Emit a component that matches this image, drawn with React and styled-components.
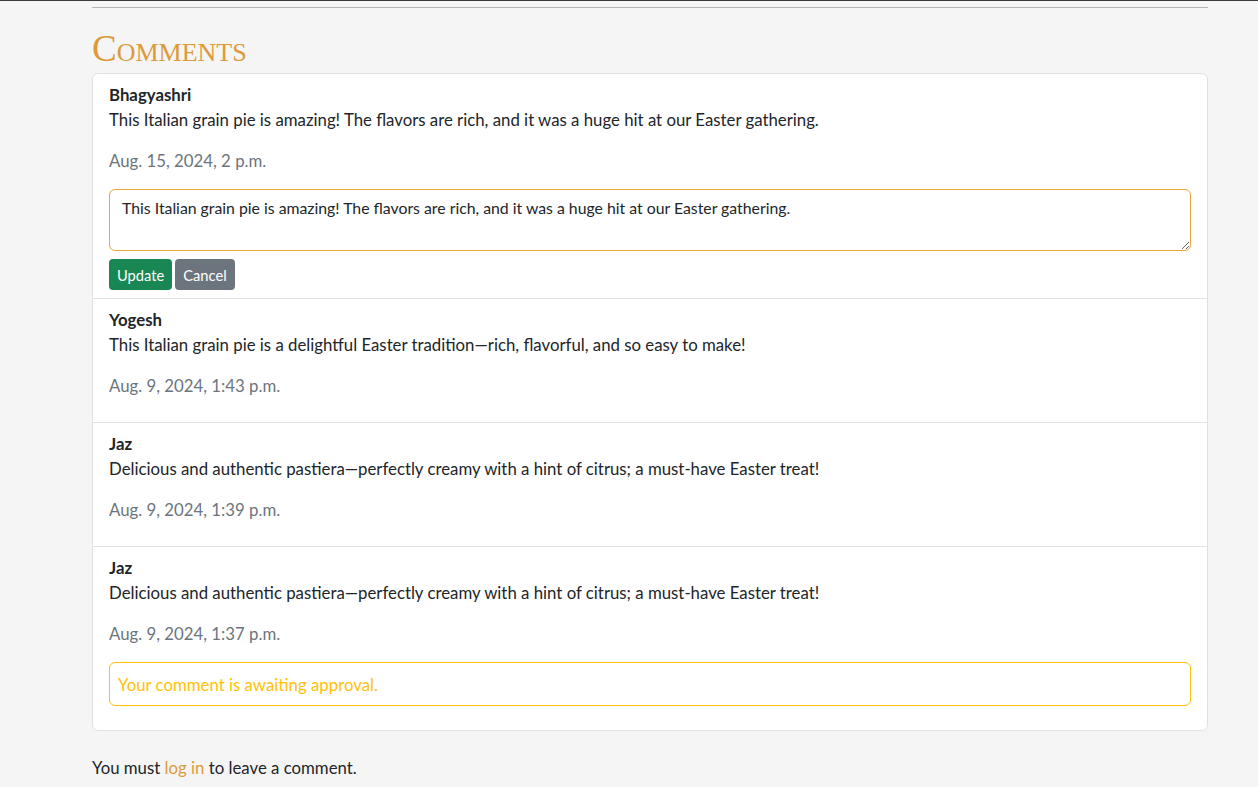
import React from "react";
import styled, { createGlobalStyle } from "styled-components";

const Global = createGlobalStyle`
  html, body { margin: 0; padding: 0; background: #f5f5f5; }
  body {
    font-family: Lato, "Noto Sans", sans-serif;
    font-size: 16.8px;
    line-height: 25px;
    color: #212529;
  }
  * { box-sizing: border-box; }
`;

const TopEdge = styled.div`
  height: 1px;
  background: #3a3a3a;
`;

const Container = styled.div`
  width: 1116px;
  margin-left: 92px;
  padding-top: 6px;
`;

const Rule = styled.hr`
  margin: 0;
  border: 0;
  border-top: 1px solid #b5b5b5;
`;

const Heading = styled.h3`
  margin: 19px 0 2px;
  font-family: "Liberation Serif", "DejaVu Serif", serif;
  font-variant: small-caps;
  font-weight: 400;
  font-size: 37px;
  line-height: 44px;
  color: #dc9a3c;
`;

const Card = styled.div`
  background: #fff;
  border: 1px solid #dee2e6;
  border-radius: 6px;
`;

const Item = styled.div`
  padding: 8px 16px;
  & + & { border-top: 1px solid #dee2e6; }
`;

const Name = styled.div`
  font-weight: 700;
`;

const Body = styled.p`
  margin: 0 0 16px;
`;

const DateLine = styled.p`
  margin: 0 0 16px;
  color: #6c757d;
`;

const TextArea = styled.textarea`
  display: block;
  width: 100%;
  height: 62px;
  padding: 6px 12px;
  border: 1px solid #e9a83a;
  border-radius: 6px;
  font-family: Lato, "Noto Sans", sans-serif;
  font-size: 15.8px;
  line-height: 1.5;
  color: #212529;
  outline: none;
  resize: vertical;
`;

const Actions = styled.div`
  display: flex;
  gap: 3px;
  margin-top: 8px;
`;

const Button = styled.button`
  height: 31px;
  padding: 0 8px;
  border: 0;
  border-radius: 4px;
  font-family: Lato, "Noto Sans", sans-serif;
  font-size: 14.7px;
  color: #fff;
  background: ${(p) => (p.$variant === "success" ? "#198754" : "#6c757d")};
  cursor: pointer;
`;

const Alert = styled.div`
  margin-bottom: 16px;
  padding: 8.5px 8px;
  border: 1px solid #ffc107;
  border-radius: 6px;
  color: #ffc107;
`;

const Footer = styled.p`
  margin: 24px 0 0;
`;

const Link = styled.a`
  color: #dc9a3c;
  text-decoration: none;
`;

const comments = [
  {
    name: "Bhagyashri",
    body: "This Italian grain pie is amazing! The flavors are rich, and it was a huge hit at our Easter gathering.",
    date: "Aug. 15, 2024, 2 p.m.",
    editing: true,
  },
  {
    name: "Yogesh",
    body: "This Italian grain pie is a delightful Easter tradition\u2014rich, flavorful, and so easy to make!",
    date: "Aug. 9, 2024, 1:43 p.m.",
  },
  {
    name: "Jaz",
    body: "Delicious and authentic pastiera\u2014perfectly creamy with a hint of citrus; a must-have Easter treat!",
    date: "Aug. 9, 2024, 1:39 p.m.",
  },
  {
    name: "Jaz",
    body: "Delicious and authentic pastiera\u2014perfectly creamy with a hint of citrus; a must-have Easter treat!",
    date: "Aug. 9, 2024, 1:37 p.m.",
    pending: true,
  },
];

export default function App() {
  return (
    <>
      <Global />
      <TopEdge />
      <Container>
        <Rule />
        <Heading>Comments</Heading>
        <Card>
          {comments.map((c, i) => (
            <Item key={i}>
              <Name>{c.name}</Name>
              <Body>{c.body}</Body>
              <DateLine>{c.date}</DateLine>
              {c.editing && (
                <>
                  <TextArea defaultValue={c.body} />
                  <Actions>
                    <Button $variant="success">Update</Button>
                    <Button>Cancel</Button>
                  </Actions>
                </>
              )}
              {c.pending && <Alert>Your comment is awaiting approval.</Alert>}
            </Item>
          ))}
        </Card>
        <Footer>
          You must <Link href="#">log in</Link> to leave a comment.
        </Footer>
      </Container>
    </>
  );
}
